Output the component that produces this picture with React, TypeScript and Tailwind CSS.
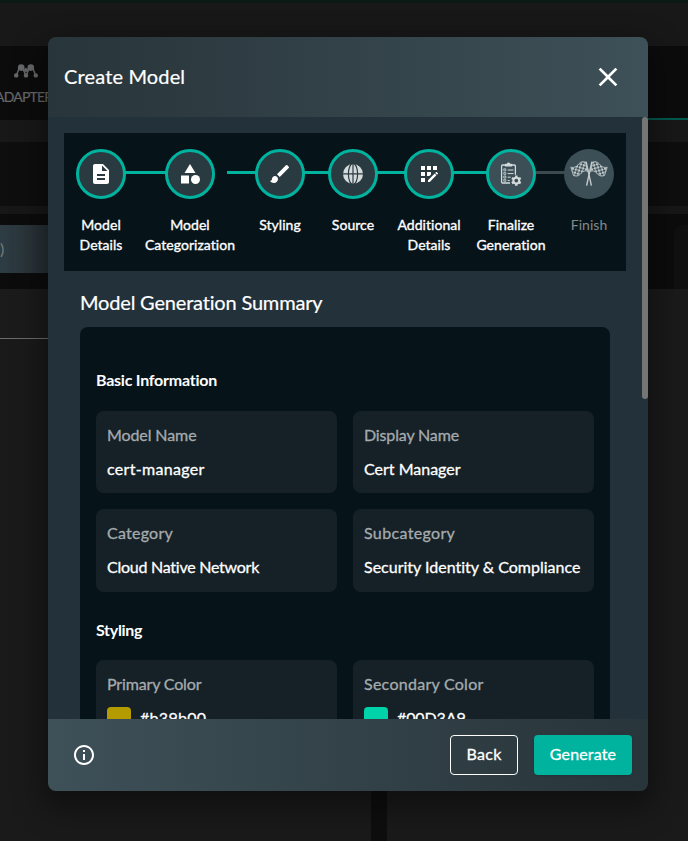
import React from "react";
import { MdDescription, MdCategory, MdBrush, MdAppRegistration, MdClose, MdInfoOutline } from "react-icons/md";

function GlobeIcon() {
  return (
    <svg viewBox="0 0 20 20" className="size-5">
      <circle cx="10" cy="10" r="10" fill="#d3dadb" />
      <g fill="none" stroke="#2a3a41" strokeWidth="1.2">
        <ellipse cx="10" cy="10" rx="4.6" ry="10.6" />
        <path d="M10 0v20M0 9.9h20" />
      </g>
    </svg>
  );
}

function ChecklistIcon() {
  return (
    <svg viewBox="0 0 22 24" className="h-6 w-[22px]" fill="none" stroke="#d3dadb">
      <path d="M5.2 3H2.6Q1.6 3 1.6 4v16q0 1 1 1H10M11.8 3h2.6q1 0 1 1v8.8" strokeWidth="1.3" />
      <path d="M4.8 4.4V2.6q0-.9 1-.9h1Q7.4.4 8.5.4t1.7 1.3h1q1 0 1 .9v1.8z" fill="#d3dadb" stroke="none" />
      <path d="M7.7 8h5.8M7.7 11.6h5.8M7.7 15.2h3M7.7 18.6h2" strokeWidth="1" />
      <path d="M3.8 6.8h2v2h-2zM3.8 10.4h2v2h-2zM3.8 14h2v2h-2zM3.8 17.3h2v2h-2z" strokeWidth=".8" />
      <circle cx="16.3" cy="18.6" r="2.9" strokeWidth="2" />
      <path d="M16.3 13.5v2M16.3 21.7v2M11.9 16.05l1.7 1M19 20.15l1.7 1M11.9 21.15l1.7-1M19 17.05l1.7-1" strokeWidth="2.4" />
    </svg>
  );
}

function FlagHalf() {
  const cloth = "M15.6 1.2C12.2-.2 10.2 1.2 8.2 3.6 6.2 5.9 4.2 7 .8 6.2L3.4 14.4c3.4 1.6 5.8.2 7.6-2 2-2.3 3.8-3.2 6.6-2z";
  return (
    <>
      <path d="M16.1.6 21.4 24.6" strokeWidth="1.4" stroke="#c3cbcd" />
      <path d={cloth} fill="url(#checks)" strokeWidth=".8" stroke="#c3cbcd" />
    </>
  );
}

function FlagsIcon() {
  return (
    <svg viewBox="0 0 38 26" className="h-[26px] w-[38px]" fill="none">
      <defs>
        <pattern id="checks" width="4.6" height="4.6" patternUnits="userSpaceOnUse" patternTransform="rotate(-28)">
          <path d="M0 0h2.3v2.3H0zM2.3 2.3h2.3v2.3H2.3z" fill="#c3cbcd" />
        </pattern>
      </defs>
      <FlagHalf />
      <g transform="translate(38 0) scale(-1 1)">
        <FlagHalf />
      </g>
    </svg>
  );
}

function AdapterIcon() {
  return (
    <svg viewBox="0 0 24 14" className="h-3.5 w-6" fill="#68696a">
      <circle cx="7.2" cy="3.6" r="3.3" />
      <circle cx="16.8" cy="3.6" r="3.3" />
      <circle cx="12" cy="6" r="2" />
      <circle cx="2.2" cy="11.4" r="2.2" />
      <circle cx="12" cy="11.4" r="2.2" />
      <circle cx="21.8" cy="11.4" r="2.2" />
      <path d="M5 4.5 2.8 10.6M9 5l2.4 5.4M15 5l-2.4 5.4M19 4.5l2.2 6.1" stroke="#68696a" strokeWidth="1.4" fill="none" />
    </svg>
  );
}

const steps = [
  { lines: ["Model", "Details"], width: "w-[74px]", line: "", icon: <MdDescription size={24} /> },
  { lines: ["Model", "Categorization"], width: "w-[104px]", line: "-left-[13px] w-[41px]", icon: <MdCategory size={24} /> },
  { lines: ["Styling"], width: "w-[76px]", line: "-left-[15px] w-[30px]", icon: <MdBrush size={24} /> },
  { lines: ["Source"], width: "w-[70px]", line: "-left-[14px] w-[26px]", icon: <GlobeIcon /> },
  { lines: ["Additional", "Details"], width: "w-[82px]", line: "-left-[11px] w-[29px]", icon: <MdAppRegistration size={24} /> },
  { lines: ["Finalize", "Generation"], width: "w-[82px]", line: "-left-[17px] w-[35px]", icon: <ChecklistIcon />, state: "current" },
  { lines: ["Finish"], width: "w-[74px]", line: "-left-[17px] w-[31px]", icon: <FlagsIcon />, state: "todo" },
];

function Stepper() {
  return (
    <div className="flex h-[138px] w-[562px] shrink-0 bg-[#06141a] pt-4">
      {steps.map((s, i) => (
        <div key={i} className={`relative flex shrink-0 flex-col items-center ${s.width}`}>
          {i > 0 && <div className={`absolute top-[22px] h-[3px] ${s.line} ${s.state === "todo" ? "bg-[#3c494f]" : "bg-[#00b39f]"}`} />}
          <div
            className={`relative z-10 flex size-[50px] items-center justify-center rounded-full text-white ${
              s.state === "todo" ? "bg-[#3c4f57]" : s.state === "current" ? "border-[3px] border-[#00b39f] bg-[#3c4f57]" : "border-[3px] border-[#00b39f] bg-[#2a3a41]"
            }`}
          >
            {s.icon}
          </div>
          <div
            className={`mt-4 text-center text-[14px] leading-5 tracking-[0.04px] whitespace-nowrap ${
              s.state === "todo" ? "text-[#83898c]" : "text-white [-webkit-text-stroke:0.35px_white]"
            }`}
          >
            {s.lines.map((l) => (
              <div key={l}>{l}</div>
            ))}
          </div>
        </div>
      ))}
    </div>
  );
}

type FieldProps = { label: string; value: string; swatch?: string; labelClass?: string; valueClass?: string };

function Field({ label, value, swatch, labelClass = "", valueClass = "" }: FieldProps) {
  return (
    <div className="h-[82.3px] rounded-lg bg-[#152127] px-[11px] pt-3">
      <div className={`text-[16px] leading-6 text-[#a5abae] [-webkit-text-stroke:0.3px_#a5abae] ${labelClass}`}>{label}</div>
      <div className={`mt-[10px] flex text-[16px] leading-6 whitespace-nowrap text-white [-webkit-text-stroke:0.3px_white] ${valueClass}`}>
        {swatch && <div className={`mt-px mr-[9px] size-6 rounded ${swatch}`} />}
        {value}
      </div>
    </div>
  );
}

function Backdrop() {
  return (
    <div className="flex h-full flex-col bg-[#1a1a1a]">
      <div className="h-[3px] bg-[#0c1a16]" />
      <div className="h-[43px] bg-[#181818]" />
      <div className="flex h-[74px] justify-between bg-[#0c0c0c]">
        <div className="flex flex-col pt-[18px] pl-[14px]">
          <AdapterIcon />
          <div className="-ml-[19px] pt-[11px] text-[14px] leading-4 tracking-[-0.8px] text-[#68696a] [-webkit-text-stroke:0.2px_#68696a]">ADAPTER</div>
        </div>
        <div className="mt-[72px] h-0.5 w-10 bg-[#005a50]" />
      </div>
      <div className="h-[22px] bg-[#181818]" />
      <div className="h-16 bg-[#0e0e0e]" />
      <div className="h-2 bg-[#171717]" />
      <div className="flex h-[75px] justify-between bg-[#0c0c0c] pt-[11px]">
        <div className="h-12 w-12 bg-linear-to-r from-[#2e3d44] to-[#262f33] text-[16px] leading-12 text-[#777b7d]">)</div>
        <div className="h-16 w-[14px] rounded-tl-lg bg-[#101010]" />
      </div>
      <div className="h-[50px] w-16 border-b border-[#6b6b6b] bg-[#1b1b1b]" />
      <div className="flex flex-1 pl-[371px]">
        <div className="w-4 bg-[#0e0e0e]" />
      </div>
    </div>
  );
}

export default function App() {
  return (
    <div className="relative h-[841px] w-[688px] overflow-hidden font-['Lato',sans-serif] [font-variant-ligatures:none]">
      <Backdrop />
      <div className="absolute top-[37px] left-12 flex h-[754px] w-[600px] flex-col overflow-hidden rounded-lg shadow-[0_12px_30px_6px_rgba(0,0,0,0.4)]">
        <header className="flex h-20 shrink-0 items-center justify-between bg-linear-to-r from-[#28353a] to-[#3e5058] pr-6 pl-4">
          <h1 className="pb-0.5 text-[20px] tracking-[0.15px] text-white [-webkit-text-stroke:0.2px_white]">Create Model</h1>
          <MdClose size={32} className="text-white" />
        </header>
        <main className="flex min-h-0 flex-1 justify-between bg-[#22313a]">
          <div className="flex h-full flex-col overflow-hidden pt-4 pl-4">
            <Stepper />
            <h2 className="mt-[15px] ml-4 text-[20px] leading-8 tracking-[-0.18px] text-white [-webkit-text-stroke:0.2px_white]">
              Model Generation Summary
            </h2>
            <section className="mt-[9px] ml-4 h-[500px] w-[530px] shrink-0 rounded-lg bg-[#06141a] px-4 pt-[41px]">
              <h3 className="text-[16px] leading-6 font-bold tracking-[-0.24px] text-white">Basic Information</h3>
              <div className="mt-[19px] grid grid-cols-2 gap-4">
                <Field label="Model Name" value="cert-manager" labelClass="tracking-[-0.1px]" valueClass="tracking-[0.3px]" />
                <Field label="Display Name" value="Cert Manager" labelClass="tracking-[-0.15px]" />
                <Field label="Category" value="Cloud Native Network" labelClass="tracking-[0.25px]" valueClass="tracking-[-0.25px]" />
                <Field label="Subcategory" value="Security Identity & Compliance" labelClass="tracking-[0.35px]" />
              </div>
              <h3 className="mt-[26px] text-[16px] leading-6 font-bold tracking-[-0.3px] text-white">Styling</h3>
              <div className="mt-[18px] grid grid-cols-2 gap-4">
                <Field label="Primary Color" value="#b39b00" swatch="bg-[#b39b00]" labelClass="tracking-[-0.15px]" valueClass="tracking-[0.3px]" />
                <Field label="Secondary Color" value="#00D3A9" swatch="bg-[#00d3a9]" labelClass="tracking-[0.27px]" valueClass="tracking-[-0.1px]" />
              </div>
            </section>
          </div>
          <div className="h-[282px] w-1.5 rounded-full bg-[#757575]" />
        </main>
        <footer className="flex h-[72px] shrink-0 items-center bg-linear-to-r from-[#3e5058] to-[#28353a] pr-4 pl-6">
          <MdInfoOutline size={24} className="text-white" />
          <button className="ml-auto h-10 w-[68px] rounded border border-white pb-0.5 text-[16px] tracking-[0.3px] text-white [-webkit-text-stroke:0.3px_white]">Back</button>
          <button className="ml-4 h-10 w-[98px] rounded bg-[#00b39f] pb-0.5 text-[16px] tracking-[0.15px] text-white shadow [-webkit-text-stroke:0.3px_white]">Generate</button>
        </footer>
      </div>
    </div>
  );
}
